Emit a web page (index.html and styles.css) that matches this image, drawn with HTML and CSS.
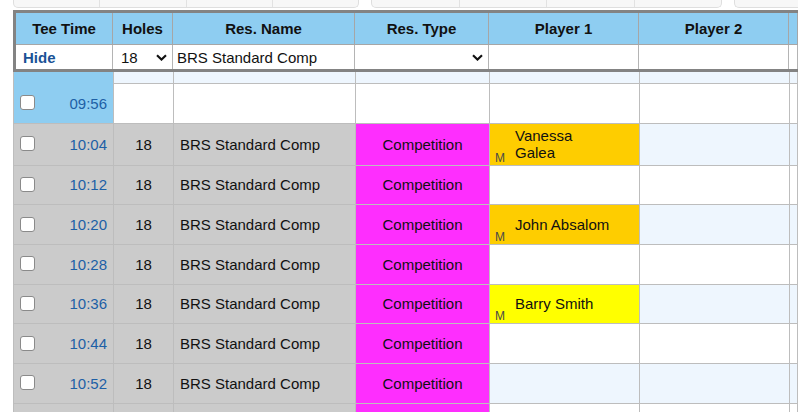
FILE: index.html
```html
<!DOCTYPE html>
<html lang="en">

<head>
    <meta charset="UTF-8">
    <meta name="viewport" content="width=device-width, initial-scale=1.0">
    <title>Tee Sheet</title>
    <link rel="stylesheet" href="styles.css">
</head>

<body>

    <!-- Button bars (scrolled off the top) -->
    <div class="tabs">
        <div class="tab-group first">
            <span></span><span></span><span></span><span></span>
        </div>
        <div class="tab-group second">
            <span></span><span></span><span></span><span></span>
        </div>
        <div class="tab-group last">
            <span></span>
        </div>
    </div>

    <!-- Header + filters -->
    <div class="sheet-head">
        <div class="head-row">
            <div class="hcell">Tee Time</div>
            <div class="hcell">Holes</div>
            <div class="hcell">Res. Name</div>
            <div class="hcell">Res. Type</div>
            <div class="hcell">Player 1</div>
            <div class="hcell">Player 2</div>
            <div class="hcell"></div>
        </div>
        <div class="filter-row">
            <div class="fcell hide">Hide</div>
            <div class="fcell pick holes">
                <span>18</span>
                <svg class="chev" width="11" height="7" viewBox="0 0 11 7"><path d="M1 1.2 L5.5 5.6 L10 1.2" fill="none" stroke="#111" stroke-width="2.1"/></svg>
            </div>
            <div class="fcell name">BRS Standard Comp</div>
            <div class="fcell pick type">
                <span></span>
                <svg class="chev" width="11" height="7" viewBox="0 0 11 7"><path d="M1 1.2 L5.5 5.6 L10 1.2" fill="none" stroke="#111" stroke-width="2.1"/></svg>
            </div>
            <div class="fcell"></div>
            <div class="fcell"></div>
            <div class="fcell"></div>
        </div>
    </div>

    <!-- Tee sheet body -->
    <div class="sheet">
        <div class="row spacer">
            <div class="cell time open"></div>
            <div class="cell"></div>
            <div class="cell"></div>
            <div class="cell"></div>
            <div class="cell"></div>
            <div class="cell"></div>
            <div class="cell"></div>
        </div>

        <div class="row even">
            <div class="cell time open"><input type="checkbox"><span>09:56</span></div>
            <div class="cell"></div>
            <div class="cell"></div>
            <div class="cell"></div>
            <div class="cell"></div>
            <div class="cell"></div>
            <div class="cell"></div>
        </div>

        <div class="row odd">
            <div class="cell time"><input type="checkbox"><span>10:04</span></div>
            <div class="cell holes">18</div>
            <div class="cell name">BRS Standard Comp</div>
            <div class="cell type">Competition</div>
            <div class="cell player gold"><span class="sex">M</span><span>Vanessa<br>Galea</span></div>
            <div class="cell"></div>
            <div class="cell"></div>
        </div>

        <div class="row even">
            <div class="cell time"><input type="checkbox"><span>10:12</span></div>
            <div class="cell holes">18</div>
            <div class="cell name">BRS Standard Comp</div>
            <div class="cell type">Competition</div>
            <div class="cell"></div>
            <div class="cell"></div>
            <div class="cell"></div>
        </div>

        <div class="row odd">
            <div class="cell time"><input type="checkbox"><span>10:20</span></div>
            <div class="cell holes">18</div>
            <div class="cell name">BRS Standard Comp</div>
            <div class="cell type">Competition</div>
            <div class="cell player gold"><span class="sex">M</span><span>John Absalom</span></div>
            <div class="cell"></div>
            <div class="cell"></div>
        </div>

        <div class="row even">
            <div class="cell time"><input type="checkbox"><span>10:28</span></div>
            <div class="cell holes">18</div>
            <div class="cell name">BRS Standard Comp</div>
            <div class="cell type">Competition</div>
            <div class="cell"></div>
            <div class="cell"></div>
            <div class="cell"></div>
        </div>

        <div class="row odd">
            <div class="cell time"><input type="checkbox"><span>10:36</span></div>
            <div class="cell holes">18</div>
            <div class="cell name">BRS Standard Comp</div>
            <div class="cell type">Competition</div>
            <div class="cell player yellow"><span class="sex">M</span><span>Barry Smith</span></div>
            <div class="cell"></div>
            <div class="cell"></div>
        </div>

        <div class="row even">
            <div class="cell time"><input type="checkbox"><span>10:44</span></div>
            <div class="cell holes">18</div>
            <div class="cell name">BRS Standard Comp</div>
            <div class="cell type">Competition</div>
            <div class="cell"></div>
            <div class="cell"></div>
            <div class="cell"></div>
        </div>

        <div class="row odd">
            <div class="cell time"><input type="checkbox"><span>10:52</span></div>
            <div class="cell holes">18</div>
            <div class="cell name">BRS Standard Comp</div>
            <div class="cell type">Competition</div>
            <div class="cell"></div>
            <div class="cell"></div>
            <div class="cell"></div>
        </div>

        <!-- next slot, only its top edge is on screen -->
        <div class="row even">
            <div class="cell time"></div>
            <div class="cell holes"></div>
            <div class="cell name"></div>
            <div class="cell type"></div>
            <div class="cell"></div>
            <div class="cell"></div>
            <div class="cell"></div>
        </div>
    </div>

</body>
</html>
```

FILE: styles.css
```css
* {
    box-sizing: border-box;
}

html,
body {
    height: 100%;
    overflow: hidden;
}

body {
    margin: 0;
    padding: 0;
    background: #fff;
    font-family: "Liberation Sans", Arial, sans-serif;
    font-size: 15px;
    color: #111;
}

/* Button bars, only the bottom edge is visible */
.tabs {
    display: flex;
    gap: 12px;
    height: 8px;
    padding-left: 13px;
}

.tab-group {
    display: flex;
    height: 8px;
    background: #f7f7f7;
    border: 1px solid #dedede;
    border-top: none;
    border-radius: 0 0 5px 5px;
}

.tab-group span {
    flex: 1;
    border-right: 1px solid #e2e2e2;
}

.tab-group span:last-child {
    border-right: none;
}

.tab-group.first {
    width: 346px;
}

.tab-group.second {
    width: 351px;
}

.tab-group.last {
    flex: 1;
    border-right: none;
    border-radius: 0 0 0 5px;
}

/* Header block */
.sheet-head {
    margin: 2px 0 0 13px;
    border: 3px solid #838383;
    border-right: none;
}

.head-row,
.filter-row {
    display: grid;
    grid-template-columns: 97px 60px 182px 134px 150px 150px 1fr;
}

.head-row {
    background: #8ecdf1;
    border-bottom: 1px solid #a6a6a6;
}

.hcell {
    height: 31px;
    display: flex;
    align-items: center;
    justify-content: center;
    font-weight: bold;
    border-right: 1px solid #a6a6a6;
}

.fcell {
    height: 24px;
    display: flex;
    align-items: center;
    background: #fff;
    border-right: 1px solid #b4b4b4;
}

.fcell.hide {
    padding-left: 7px;
    font-weight: bold;
    color: #1a5296;
}

.fcell.pick {
    justify-content: space-between;
    padding: 0 5px 0 8px;
}

.fcell.name {
    padding-left: 4px;
}

.chev {
    margin-top: 1px;
}

/* Body */
.sheet {
    margin-left: 13px;
    border-left: 1px solid #bdbdbd;
}

.row {
    display: grid;
    grid-template-columns: 100px 60px 182px 134px 150px 150px 1fr;
    min-height: 39.67px;
}

.row.spacer {
    min-height: 12px;
}

.cell {
    display: flex;
    align-items: center;
    border-right: 1px solid #bdbdbd;
    border-bottom: 1px solid #bdbdbd;
}

.row.odd .cell,
.row.spacer .cell {
    background: #eef6fe;
}

.row.even .cell {
    background: #fff;
}

.row .cell.time {
    justify-content: space-between;
    padding: 0 6px 0 6px;
    background: #cbcbcb;
    color: #1d5fa6;
}

.row .cell.time.open {
    background: #8ecdf1;
}

.row.spacer .cell.time {
    border-bottom: none;
}

.cell.time input {
    appearance: none;
    -webkit-appearance: none;
    margin: 0 0 1px;
    width: 15px;
    height: 15px;
    background: #fff;
    border: 1px solid #8a8a8a;
    border-radius: 3px;
}

.row .cell.holes {
    justify-content: center;
    background: #cbcbcb;
}

.row .cell.name {
    padding-left: 6px;
    background: #cbcbcb;
}

.row .cell.type {
    justify-content: center;
    background: #fe2efe;
}

.cell.player {
    position: relative;
    padding: 3px 0 4px 25px;
    line-height: 17px;
}

.row .cell.gold {
    background: #fecd00;
}

.row .cell.yellow {
    background: #ffff00;
}

.sex {
    position: absolute;
    left: 5px;
    bottom: 1px;
    font-size: 12px;
    line-height: 12px;
    color: #4a4a4a;
}
```
